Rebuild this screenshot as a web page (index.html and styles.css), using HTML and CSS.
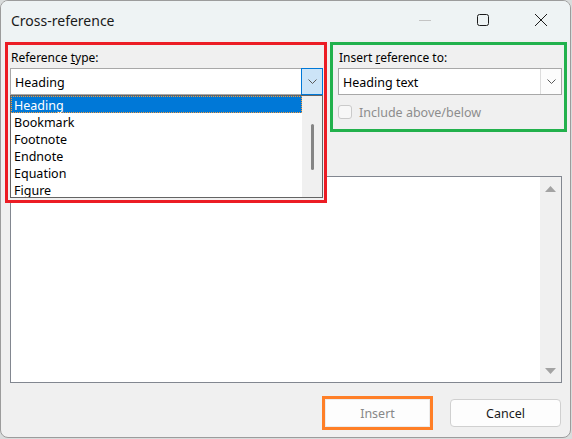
FILE: index.html
```html
<!DOCTYPE html>
<html lang="en">
<head>
    <meta charset="UTF-8">
    <title>Cross-reference</title>
    <link rel="stylesheet" href="styles.css">
</head>
<body>
    <div class="window">
        <div class="titlebar">
            <span class="title">Cross-reference</span>
            <div class="caption-btn">
                <svg width="14" height="14" viewBox="0 0 14 14"><path d="M1 7.5h12" stroke="#c4c4c4" stroke-width="1"/></svg>
            </div>
            <div class="caption-btn">
                <svg width="14" height="14" viewBox="0 0 14 14"><rect x="1.5" y="1.5" width="11" height="11" rx="2" fill="none" stroke="#1b1b1b" stroke-width="1"/></svg>
            </div>
            <div class="caption-btn">
                <svg width="14" height="14" viewBox="0 0 14 14"><path d="M1 1l12 12M13 1L1 13" stroke="#1b1b1b" stroke-width="1"/></svg>
            </div>
        </div>

        <div class="content">
            <div class="top-row">
                <div class="group mark-red">
                    <label class="field-label">Reference <u>t</u>ype:</label>
                    <div class="combo">
                        <span class="combo-text">Heading</span>
                        <span class="combo-btn open">
                            <svg width="9" height="5" viewBox="0 0 9 5"><path d="M0.5 0.5l4 4 4-4" fill="none" stroke="#5a5a5a" stroke-width="1"/></svg>
                        </span>
                    </div>
                    <div class="droplist">
                        <ul class="items">
                            <li class="selected">Heading</li>
                            <li>Bookmark</li>
                            <li>Footnote</li>
                            <li>Endnote</li>
                            <li>Equation</li>
                            <li>Figure</li>
                        </ul>
                        <div class="vscroll"><span class="thumb"></span></div>
                    </div>
                </div>

                <div class="group mark-green">
                    <label class="field-label">Insert <u>r</u>eference to:</label>
                    <div class="combo">
                        <span class="combo-text">Heading text</span>
                        <span class="combo-btn">
                            <svg width="9" height="5" viewBox="0 0 9 5"><path d="M0.5 0.5l4 4 4-4" fill="none" stroke="#5a5a5a" stroke-width="1"/></svg>
                        </span>
                    </div>
                    <div class="check-row">
                        <span class="checkbox"></span>
                        <span class="check-label">Include above/below</span>
                    </div>
                </div>
            </div>

            <div class="listbox">
                <div class="listbox-body"></div>
                <div class="listbox-scroll">
                    <svg width="11" height="6" viewBox="0 0 11 6"><path d="M5.5 0L11 6H0z" fill="#a3a3a3"/></svg>
                    <svg width="11" height="6" viewBox="0 0 11 6"><path d="M0 0h11L5.5 6z" fill="#a3a3a3"/></svg>
                </div>
            </div>

            <div class="buttons">
                <div class="mark-orange">
                    <button class="btn disabled">Insert</button>
                </div>
                <button class="btn">Cancel</button>
            </div>
        </div>
    </div>
</body>
</html>
```

FILE: styles.css
```css
body {
    margin: 0;
    background: #d9dcdc;
    font-family: "Noto Sans", "Open Sans", sans-serif;
    font-size: 12px;
    color: #000;
}
.window {
    width: 571px;
    height: 438px;
    box-sizing: border-box;
    border: 1px solid #9c9c9c;
    border-radius: 8px;
    overflow: hidden;
    background: #f0f0f0;
}
.titlebar {
    display: flex;
    align-items: center;
    height: 39px;
    background: #eef3f4;
    padding-left: 10px;
}
.title {
    font-size: 14px;
    color: #1a1a1a;
    flex: 1;
}
.caption-btn {
    width: 58px;
    height: 39px;
    display: flex;
    align-items: center;
    justify-content: center;
}
.caption-btn svg {
    display: block;
    margin-top: -1px;
}
.content {
    padding: 2px 3px 0 4px;
}
.top-row {
    display: flex;
    gap: 3px;
    height: 90px;
    align-items: flex-start;
}
.group {
    box-sizing: border-box;
    background: #f0f0f0;
    position: relative;
}
.mark-red {
    width: 322px;
    border: 3px solid #ec1c24;
    padding: 4px 1px 2px 2px;
    z-index: 1;
}
.mark-green {
    width: 237px;
    height: 90px;
    border: 3px solid #22b14c;
    padding: 4px 2px 0 5px;
}
.field-label {
    display: block;
    height: 16px;
    line-height: 18px;
    margin-bottom: 3px;
    padding-left: 1px;
}
.combo {
    display: flex;
    height: 27px;
    box-sizing: border-box;
    border: 1px solid #a8a8a8;
    background: #fff;
}
.combo-text {
    flex: 1;
    line-height: 27px;
    padding-left: 4px;
    font-size: 12.5px;
}
.combo-btn {
    width: 21px;
    display: flex;
    align-items: center;
    justify-content: center;
    box-sizing: border-box;
    border-left: 1px solid #dcdcdc;
    background: #fcfcfc;
}
.combo-btn.open {
    border: 1px solid #0078d7;
    background: #cce4f7;
    margin: -1px -1px -1px 0;
    width: 22px;
}
.droplist {
    display: flex;
    height: 103px;
    box-sizing: border-box;
    border: 1px solid #646464;
    background: #fff;
    overflow: hidden;
}
.items {
    list-style: none;
    margin: 0;
    padding: 0;
    flex: 1;
}
.items li {
    height: 17px;
    line-height: 19px;
    padding-left: 3px;
    font-size: 12.5px;
}
.items li.selected {
    background: #0078d7;
    color: #fff;
    outline: 1px dotted #f39a3c;
    outline-offset: -1px;
}
.vscroll {
    width: 20px;
    background: #f0f0f0;
    position: relative;
}
.thumb {
    position: absolute;
    left: 9px;
    top: 28px;
    width: 3px;
    height: 46px;
    border-radius: 2px;
    background: #858585;
}
.check-row {
    display: flex;
    align-items: center;
    gap: 7px;
    margin-top: 7px;
}
.checkbox {
    width: 14px;
    height: 14px;
    box-sizing: border-box;
    border: 1px solid #cacaca;
    border-radius: 3px;
    background: #f7f7f7;
}
.check-label {
    color: #8d8d8d;
    font-size: 12.5px;
    padding-top: 2px;
}
.listbox {
    display: flex;
    margin: 44px 0 0 5px;
    width: 552px;
    height: 207px;
    box-sizing: border-box;
    border: 1px solid #828790;
    background: #fff;
}
.listbox-body {
    flex: 1;
}
.listbox-scroll {
    width: 21px;
    background: #f0f0f0;
    display: flex;
    flex-direction: column;
    justify-content: space-between;
    align-items: center;
    padding: 9px 0 8px;
}
.listbox-scroll svg {
    display: block;
}
.buttons {
    display: flex;
    justify-content: flex-end;
    align-items: flex-start;
    gap: 17px;
    margin-top: 13px;
    padding-right: 6px;
}
.mark-orange {
    border: 3px solid #ff7f27;
    display: flex;
}
.btn {
    width: 111px;
    height: 28px;
    box-sizing: border-box;
    border: 1px solid #d0d0d0;
    border-radius: 4px;
    background: #fdfdfd;
    font-family: "Noto Sans", "Open Sans", sans-serif;
    font-size: 12.5px;
    color: #1a1a1a;
    padding: 1px 0 0;
    margin-top: 3px;
}
.btn.disabled {
    width: 105px;
    margin-top: 0;
    border-color: #ececec;
    border-radius: 0;
    color: #888;
}
```
